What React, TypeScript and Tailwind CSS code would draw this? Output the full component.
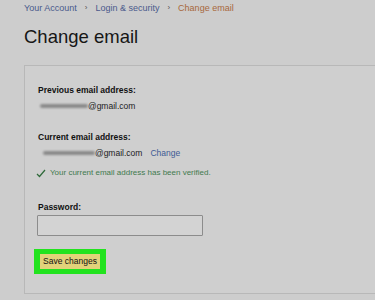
import React from "react";

export default function App() {
  return (
    <div className="w-[375px] h-[300px] overflow-hidden bg-[#cdcdcd] text-[#111] pl-6" style={{ fontFamily: '"Liberation Sans", Arial, sans-serif' }}>
      <div className="flex items-center gap-[8px] pt-[2px] h-[14px] text-[9px] leading-none">
        <span className="text-[#4a5a8c]">Your Account</span>
        <span className="text-[#555] text-[8px]">›</span>
        <span className="text-[#4a5a8c]">Login &amp; security</span>
        <span className="text-[#555] text-[8px]">›</span>
        <span className="text-[#a8683c]">Change email</span>
      </div>
      <h1 className="mt-[12px] text-[18.5px] leading-[22px] font-normal text-[#161616]">Change email</h1>
      <div className="mt-[17px] h-[229px] border border-[#b8b8b8] border-r-0 bg-[#cfcfcf] pl-[13px] pt-[18px]">
        <div className="text-[8.5px] font-bold leading-[12px]">Previous email address:</div>
        <div className="mt-[4px] flex items-center text-[8.5px] leading-[12px] text-[#222]">
          <span className="w-[48px] h-[4px] rounded-full bg-[#8a8a8a] blur-[1px] ml-[2px]" />
          <span>@gmail.com</span>
        </div>
        <div className="mt-[19px] text-[8.5px] font-bold leading-[12px]">Current email address:</div>
        <div className="mt-[4px] flex items-center text-[8.5px] leading-[12px] text-[#222]">
          <span className="w-[52px] h-[4px] rounded-full bg-[#8a8a8a] blur-[1px] ml-[5px]" />
          <span>@gmail.com</span>
          <span className="ml-[8px] text-[#3e5a94]">Change</span>
        </div>
        <div className="mt-[8px] flex items-center gap-[4px] text-[8px] leading-[12px] text-[#3f7a4e]">
          <svg width="10" height="9" viewBox="0 0 10 9" className="-ml-[2px]">
            <path d="M1 5 L3.5 7.5 L9 1" fill="none" stroke="#2f6a3a" strokeWidth="1.2" />
          </svg>
          <span>Your current email address has been verified.</span>
        </div>
        <div className="mt-[22px] text-[8.5px] font-bold leading-[12px]">Password:</div>
        <div className="mt-[2px] w-[166px] h-[21px] border border-[#8c8c8c] bg-[#d3d3d3] rounded-[1px] -ml-[1px]" />
        <div className="mt-[13px] -ml-[4px] w-[72px] h-[25px] bg-[#22e31f] flex items-center justify-center">
          <div className="px-[3px] h-[15px] bg-[#e2d27a] text-[8.5px] leading-[15px] text-[#111]">Save changes</div>
        </div>
      </div>
    </div>
  );
}
